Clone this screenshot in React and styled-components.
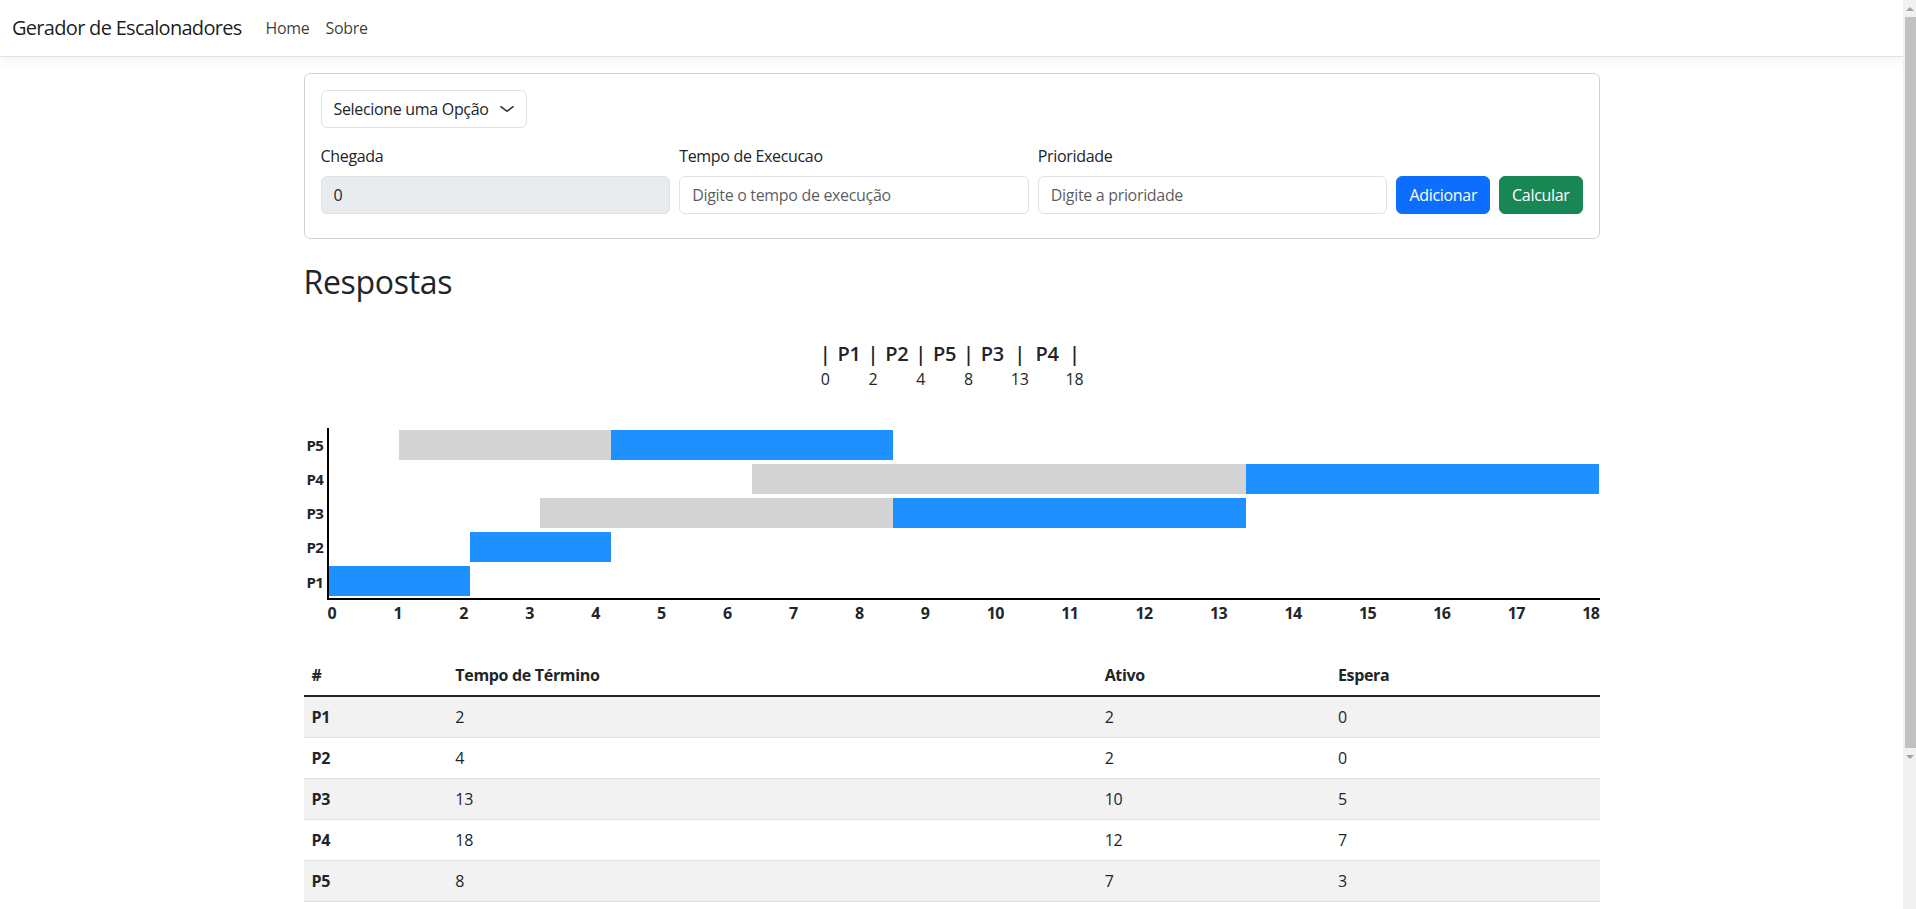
import { styled, createGlobalStyle } from "styled-components";

const GlobalStyle = createGlobalStyle`
  *, *::before, *::after {
    box-sizing: border-box;
  }
  body {
    margin: 0;
    font-family: "Segoe UI", "Open Sans", "Noto Sans", sans-serif;
    font-size: 16px;
    line-height: 1.5;
    letter-spacing: -0.02em;
    color: #212529;
    background: #fff;
    overflow: hidden;
  }
`;

const TOTAL = 18;

const processes = [
  { id: "P1", arrival: 0, start: 0, end: 2, active: 2, wait: 0 },
  { id: "P2", arrival: 2, start: 2, end: 4, active: 2, wait: 0 },
  { id: "P3", arrival: 3, start: 8, end: 13, active: 10, wait: 5 },
  { id: "P4", arrival: 6, start: 13, end: 18, active: 12, wait: 7 },
  { id: "P5", arrival: 1, start: 4, end: 8, active: 7, wait: 3 },
];

// order the processes ran in, with the time each one started
const order = [
  { id: "P1", at: 0 },
  { id: "P2", at: 2 },
  { id: "P5", at: 4 },
  { id: "P3", at: 8 },
  { id: "P4", at: 13 },
];

const pct = (v) => `${(v / TOTAL) * 100}%`;

export default function App() {
  const rows = [...processes].reverse();
  return (
    <Shell>
      <GlobalStyle />
      <Viewport>
        <Navbar>
          <Brand href="#">Gerador de Escalonadores</Brand>
          <NavLink href="#">Home</NavLink>
          <NavLink href="#">Sobre</NavLink>
        </Navbar>

        <Container>
          <Card>
            <SelectBox>
              <span>Selecione uma Opção</span>
              <svg width="16" height="12" viewBox="0 0 16 16" preserveAspectRatio="none" fill="none">
                <path
                  d="m2 5 6 6 6-6"
                  stroke="#343a40"
                  strokeWidth="2"
                  strokeLinecap="round"
                  strokeLinejoin="round"
                />
              </svg>
            </SelectBox>

            <FieldRow>
              <Field>
                <Label>Chegada</Label>
                <Input value="0" disabled readOnly />
              </Field>
              <Field>
                <Label>Tempo de Execucao</Label>
                <Input placeholder="Digite o tempo de execução" />
              </Field>
              <Field>
                <Label>Prioridade</Label>
                <Input placeholder="Digite a prioridade" />
              </Field>
              <Button $bg="#0d6efd">Adicionar</Button>
              <Button $bg="#198754">Calcular</Button>
            </FieldRow>
          </Card>

          <Heading>Respostas</Heading>

          <GanttLine>
            {order.map((p) => (
              <Segment key={p.id}>
                <Tick>
                  <TickBar>|</TickBar>
                  <TickTime>{p.at}</TickTime>
                </Tick>
                <SegLabel>{p.id}</SegLabel>
              </Segment>
            ))}
            <Tick>
              <TickBar>|</TickBar>
              <TickTime>{TOTAL}</TickTime>
            </Tick>
          </GanttLine>

          <Chart>
            {rows.map((p, i) => (
              <ChartRow key={p.id}>
                <RowLabel>{p.id}</RowLabel>
                <Track $axis={i === rows.length - 1}>
                  <Bar style={{ width: pct(p.arrival) }} />
                  <Bar $kind="wait" style={{ width: pct(p.start - p.arrival) }} />
                  <Bar $kind="run" style={{ width: pct(p.end - p.start) }} />
                </Track>
              </ChartRow>
            ))}
            <ChartRow>
              <span />
              <Ticks>
                {Array.from({ length: TOTAL + 1 }, (_, n) => (
                  <span key={n}>{n}</span>
                ))}
              </Ticks>
            </ChartRow>
          </Chart>

          <Table>
            <thead>
              <tr>
                <Th $w="11.1%">#</Th>
                <Th $w="50.1%">Tempo de Término</Th>
                <Th $w="18%">Ativo</Th>
                <Th $w="20.8%">Espera</Th>
              </tr>
            </thead>
            <tbody>
              {processes.map((p) => (
                <tr key={p.id}>
                  <RowHead>{p.id}</RowHead>
                  <Td>{p.end}</Td>
                  <Td>{p.active}</Td>
                  <Td>{p.wait}</Td>
                </tr>
              ))}
            </tbody>
          </Table>
        </Container>
      </Viewport>

      <ScrollRail>
        <Arrow $dir="up" />
        <Thumb />
        <Arrow $dir="down" />
      </ScrollRail>
    </Shell>
  );
}

const Shell = styled.div`
  display: flex;
  height: 100vh;
`;

const Viewport = styled.div`
  flex: 1;
  min-width: 0;
  overflow: hidden;
`;

const ScrollRail = styled.div`
  flex: none;
  width: 13px;
  display: flex;
  flex-direction: column;
  align-items: center;
  background: #f1f1f1;
`;

const Arrow = styled.span`
  flex: none;
  display: flex;
  align-items: center;
  justify-content: center;
  width: 100%;
  height: 17px;

  &::before {
    content: "";
    border-left: 4px solid transparent;
    border-right: 4px solid transparent;
    ${(p) => (p.$dir === "up" ? "border-bottom" : "border-top")}: 4px solid #a3a3a3;
  }
`;

const Thumb = styled.div`
  align-self: flex-end;
  width: 11px;
  height: 731px;
  background: #c1c1c1;
`;

const Navbar = styled.nav`
  display: flex;
  align-items: center;
  padding: 8px 12px;
  background: #fff;
  border-bottom: 1px solid #dee2e6;
  box-shadow: 0 4px 12px rgba(0, 0, 0, 0.05);
`;

const Brand = styled.a`
  font-size: 20px;
  line-height: 30px;
  letter-spacing: -0.035em;
  padding: 5px 0;
  margin-right: 16px;
  color: rgba(0, 0, 0, 0.9);
  text-decoration: none;
`;

const NavLink = styled.a`
  padding: 8px;
  color: rgba(0, 0, 0, 0.78);
  text-decoration: none;
`;

const Container = styled.main`
  max-width: 1320px;
  margin: 16px auto 0;
  padding: 0 12px 48px;
`;

const Card = styled.section`
  border: 1px solid rgba(0, 0, 0, 0.175);
  border-radius: 6px;
  padding: 16px;
`;

const SelectBox = styled.div`
  display: inline-flex;
  align-items: center;
  gap: 10px;
  height: 38px;
  padding: 6px 11px 6px 12px;
  border: 1px solid #dee2e6;
  border-radius: 6px;
  color: #212529;
`;

const FieldRow = styled.div`
  display: flex;
  align-items: flex-end;
  gap: 9px;
  margin: 16px 0 8px;
`;

const Field = styled.div`
  flex: 1;
  display: flex;
  flex-direction: column;
`;

const Label = styled.label`
  margin-bottom: 8px;
`;

const Input = styled.input`
  height: 38px;
  padding: 6px 12px;
  font: inherit;
  letter-spacing: inherit;
  color: #212529;
  background: #fff;
  border: 1px solid #dee2e6;
  border-radius: 6px;
  outline: none;

  &::placeholder {
    color: rgba(33, 37, 41, 0.75);
  }
  &:disabled {
    background: #e9ecef;
    color: #212529;
    -webkit-text-fill-color: #212529;
    opacity: 1;
  }
`;

const Button = styled.button`
  height: 38px;
  padding: 6px 12px;
  font: inherit;
  letter-spacing: inherit;
  color: #fff;
  background: ${(p) => p.$bg};
  border: 1px solid ${(p) => p.$bg};
  border-radius: 6px;
  cursor: pointer;
`;

const Heading = styled.h2`
  font-size: 32px;
  font-weight: 500;
  line-height: 1.2;
  margin: 24px 0 8px;
`;

const GanttLine = styled.div`
  display: flex;
  justify-content: center;
  margin: 39px 0 38px;
`;

const Segment = styled.div`
  display: flex;
`;

const Tick = styled.div`
  display: flex;
  flex-direction: column;
  align-items: center;
`;

const TickBar = styled.span`
  font-size: 20px;
  font-weight: 600;
  line-height: 28px;
`;

const TickTime = styled.span`
  font-size: 16px;
  line-height: 22px;
`;

const SegLabel = styled.span`
  font-size: 20px;
  font-weight: 600;
  line-height: 28px;
  padding: 0 7px;
`;

const Chart = styled.div`
  display: flex;
  flex-direction: column;
`;

const ChartRow = styled.div`
  display: grid;
  grid-template-columns: 23px 1fr;
`;

const RowLabel = styled.span`
  align-self: center;
  text-align: right;
  padding-right: 3px;
  font-size: 15px;
  font-weight: 700;
  line-height: 20px;
  letter-spacing: -0.03em;
`;

const Track = styled.div`
  display: flex;
  height: ${(p) => (p.$axis ? "36px" : "34px")};
  padding: 2px 0;
  border-left: 2px solid #000;
  border-bottom: ${(p) => (p.$axis ? "2px solid #000" : "none")};
`;

const Bar = styled.div`
  flex: none;
  height: 100%;
  background: ${(p) =>
    p.$kind === "run" ? "#1e90ff" : p.$kind === "wait" ? "#d3d3d3" : "transparent"};
`;

const Ticks = styled.div`
  display: flex;
  justify-content: space-between;
  padding: 2px 0 0 1px;
  font-size: 16px;
  font-weight: 700;
  line-height: 22px;
  letter-spacing: -0.04em;
`;

const Table = styled.table`
  width: 100%;
  margin-top: 31px;
  border-collapse: collapse;

  tbody tr:nth-child(odd) {
    background: #f2f2f2;
  }
`;

const Th = styled.th`
  width: ${(p) => p.$w};
  padding: 8px;
  text-align: left;
  font-weight: 700;
  border-bottom: 2px solid #212529;
`;

const RowHead = styled.th`
  padding: 8px;
  text-align: left;
  font-weight: 700;
  border-bottom: 1px solid #dee2e6;
`;

const Td = styled.td`
  padding: 8px;
  border-bottom: 1px solid #dee2e6;
`;
